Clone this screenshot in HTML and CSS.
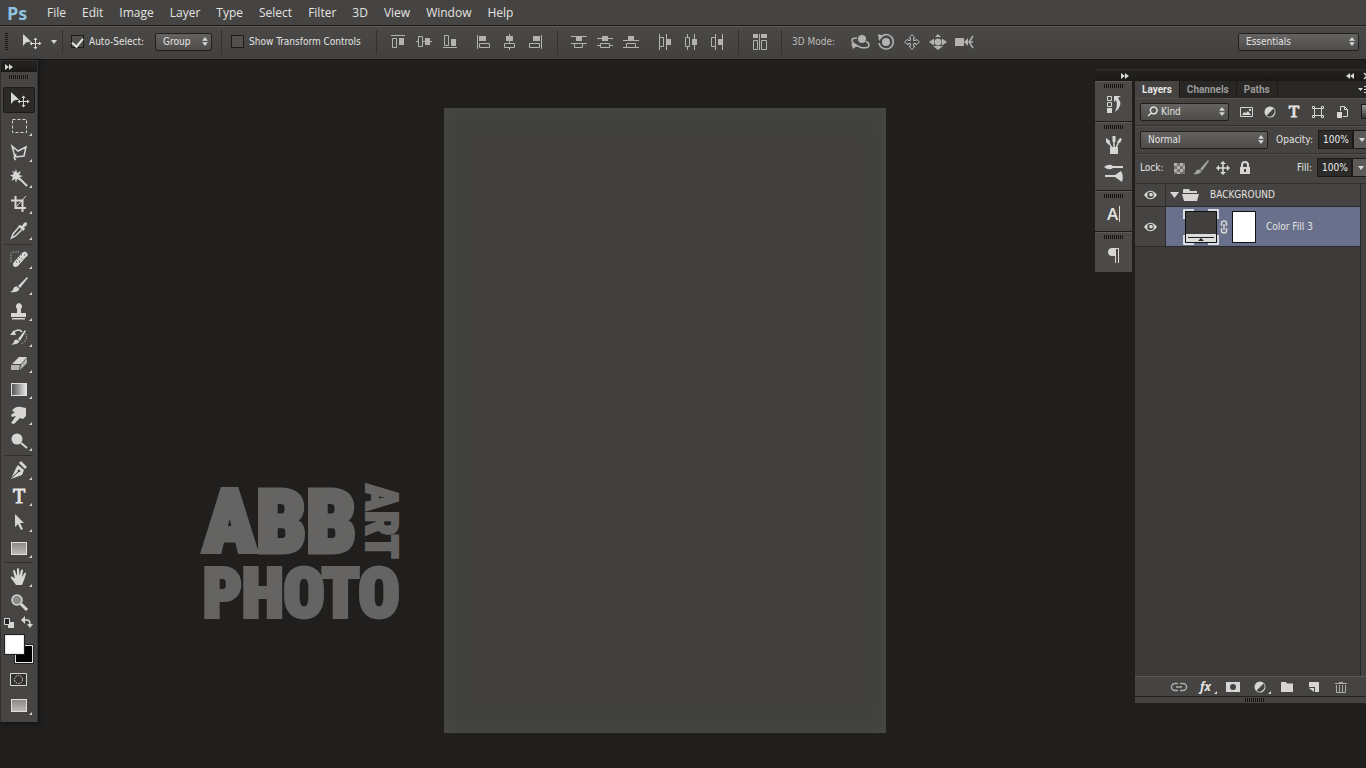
FILE: index.html
```html
<!DOCTYPE html>
<html lang="en">
<head>
<meta charset="utf-8">
<title>Ps</title>
<link rel="stylesheet" href="styles.css">
</head>
<body>
<svg class="defs" aria-hidden="true">
  <symbol id="updown" viewBox="0 0 7 11"><path d="M0 4.500 3.500 0 7 4.500zM0 6.500 3.500 11 7 6.500z"/></symbol>
  <symbol id="corner" viewBox="0 0 4 4"><path d="M4 0v4H0z"/></symbol>
  <symbol id="eye" viewBox="0 0 14 10"><path fill-rule="evenodd" d="M0 5Q7-4 14 5 7 14 0 5zM7 1.500a3.500 3.500 0 1 0 0 7 3.500 3.500 0 0 0 0-7z"/><circle cx="7.500" cy="4.500" r="2"/></symbol>
  <symbol id="move" viewBox="0 0 24 24"><path d="M4 4v12l3-3.500 5-1z"/><path d="M16.500 7.500l2 2.500h-1.500v3h3v-1.500l2.500 2-2.500 2V14h-3v3h1.500l-2 2.500-2-2.500H16v-3h-3v1.500l-2.500-2 2.500-2V13h3v-3h-1.500z"/></symbol>
  <symbol id="cross" viewBox="0 0 16 16"><path d="M8 1l3 3H8.800v3.200H12V5l3 3-3 3V8.800H8.800V12H11l-3 3-3-3h2.200V8.800H4V11L1 8l3-3v2.200h3.200V4H5z"/></symbol>
  <symbol id="halfdisc" viewBox="0 0 12 12"><circle cx="6" cy="6" r="5.500"/><path class="ink" d="M9.500 2.500a5 5 0 0 1-7 7z"/></symbol>
</svg>

<nav class="menubar">
  <span class="logo">Ps</span>
  <a href="#">File</a><a href="#">Edit</a><a href="#">Image</a><a href="#">Layer</a><a href="#">Type</a><a href="#">Select</a><a href="#">Filter</a><a href="#">3D</a><a href="#">View</a><a href="#">Window</a><a href="#">Help</a>
</nav>

<header class="options">
  <i class="vgrip"></i>
  <button class="current" aria-label="Move tool"><svg class="i24"><use href="#move"/></svg><svg class="caret" viewBox="0 0 6 4"><path d="M0 0h6L3 4z"/></svg></button>
  <i class="bar"></i>
  <label class="check auto"><input type="checkbox" checked>Auto-Select:</label>
  <span class="pick group"><select aria-label="Auto-Select"><option>Group</option></select><svg><use href="#updown"/></svg></span>
  <i class="bar"></i>
  <label class="check transform"><input type="checkbox">Show Transform Controls</label>
  <i class="bar"></i>
  <div class="set">
    <button aria-label="Align top edges"><svg viewBox="0 0 16 16"><path class="s" d="M1 1.500h14M2.500 4.500h4v9h-4z"/><path d="M9 4h5v7H9z"/></svg></button>
    <button aria-label="Align vertical centers"><svg viewBox="0 0 16 16"><path class="s" d="M0 7.500h2M7 7.500h2M14 7.500h2M2.500 2.500h4v10h-4z"/><path d="M9 4h5v7H9z"/></svg></button>
    <button aria-label="Align bottom edges"><svg viewBox="0 0 16 16"><path class="s" d="M1 13.500h14M2.500 1.500h4v10h-4z"/><path d="M9 5h5v7H9z"/></svg></button>
  </div>
  <div class="set">
    <button aria-label="Align left edges"><svg viewBox="0 0 16 16"><path class="s" d="M1.500 1v14M3.500 9.500h10v4h-10z"/><path d="M3 2h7v5H3z"/></svg></button>
    <button aria-label="Align horizontal centers"><svg viewBox="0 0 16 16"><path class="s" d="M7.500 0v2M7.500 7v2M7.500 14v2M2.500 9.500h10v4h-10z"/><path d="M4 2h7v5H4z"/></svg></button>
    <button aria-label="Align right edges"><svg viewBox="0 0 16 16"><path class="s" d="M13.500 1v14M1.500 9.500h10v4h-10z"/><path d="M5 2h7v5H5z"/></svg></button>
  </div>
  <i class="bar"></i>
  <div class="set">
    <button aria-label="Distribute top edges"><svg viewBox="0 0 16 16"><path class="s" d="M0 2.500h16M0 9.500h16M3.500 9.500h8v4h-8z"/><path d="M5 3h6v4H5z"/></svg></button>
    <button aria-label="Distribute vertical centers"><svg viewBox="0 0 16 16"><path class="s" d="M0 4.500h16M0 11.500h4M12 11.500h4M3.500 9.500h9v4h-9z"/><path d="M5 2h6v5H5z"/></svg></button>
    <button aria-label="Distribute bottom edges"><svg viewBox="0 0 16 16"><path class="s" d="M0 6.500h16M0 13.500h16M3.500 9.500h9v4h-9z"/><path d="M5 2h6v4H5z"/></svg></button>
  </div>
  <div class="set">
    <button aria-label="Distribute left edges"><svg viewBox="0 0 16 16"><path class="s" d="M2.500 0v16M9.500 0v16M2.500 3.500h4v9h-4z"/><path d="M10 5h4v6h-4z"/></svg></button>
    <button aria-label="Distribute horizontal centers"><svg viewBox="0 0 16 16"><path class="s" d="M4.500 0v3M4.500 13v3M11.500 0v16M2.500 3.500h4v9h-4z"/><path d="M9 5h5v6H9z"/></svg></button>
    <button aria-label="Distribute right edges"><svg viewBox="0 0 16 16"><path class="s" d="M6.500 0v16M13.500 0v16M2.500 3.500h4v9h-4z"/><path d="M9 5h4v6H9z"/></svg></button>
  </div>
  <i class="bar"></i>
  <div class="set"><button aria-label="Auto-align layers"><svg viewBox="0 0 16 16"><path class="s" d="M7.500 0v16M1.500 6.500h4v9h-4zM9.500 6.500h5v9h-5z"/><path d="M1 0h5v4H1zM9 0h6v4H9z"/></svg></button></div>
  <i class="bar"></i>
  <span class="mode">3D Mode:</span>
  <div class="set three">
    <button aria-label="Rotate the 3D object"><svg viewBox="0 0 20 16"><circle cx="12" cy="5" r="4"/><path class="k" d="M7 4Q1 4 2 7t9 6.500q8 1 8-2t-3-4M3 13l4-1"/><path d="M1 9l6 2-4 4z"/></svg></button>
    <button aria-label="Roll the 3D object"><svg viewBox="0 0 20 16"><circle cx="10" cy="8" r="4"/><path class="k" d="M4 4a7.200 7.200 0 1 1-1 5"/><path d="M2 0l5 2-4 5z"/></svg></button>
    <button aria-label="Drag the 3D object"><svg viewBox="0 0 20 16"><path class="s" d="M10 .5l3 3.500h-1.500v2.500H14V5l3.500 3-3.500 3V9.500h-2.500V12H13l-3 3.500L7 12h1.500V9.500H6V11L2.500 8 6 5v1.500h2.500V4H7z"/></svg></button>
    <button aria-label="Slide the 3D object"><svg viewBox="0 0 20 16"><circle cx="10" cy="8" r="3.600"/><path d="M10 0l3 3H7zM10 16l5-4H5zM1 8l5-3.500v7zM19 8l-5-3.500v7z"/></svg></button>
    <button aria-label="Zoom the 3D camera"><svg viewBox="0 0 20 16"><path d="M1 4h9v8H1zM10 8l4-4v8z"/><path class="k" d="M19 2l-4 6 4 6M16 8h3"/></svg></button>
  </div>
  <span class="pick essentials"><select aria-label="Workspace"><option>Essentials</option></select><svg><use href="#updown"/></svg></span>
</header>

<main class="workspace">
  <aside class="tools">
    <div class="cap"><svg viewBox="0 0 8 6"><path d="M0 0l4 3-4 3zM4 0l4 3-4 3z"/></svg></div>
    <i class="grip"></i>
    <button class="on" aria-label="Move"><svg class="i24"><use href="#move"/></svg></button>
    <button aria-label="Marquee"><svg class="i24" viewBox="0 0 24 24"><rect class="s" x="5.500" y="5.500" width="14" height="13" stroke-dasharray="3 2"/></svg><svg class="more"><use href="#corner"/></svg></button>
    <button aria-label="Lasso"><svg class="i24" viewBox="0 0 24 24"><path class="k" d="M5 6l6 5 8-4-2 9-9 1zM8 17l1-3M8 16q-2 2 1 4"/></svg><svg class="more"><use href="#corner"/></svg></button>
    <button aria-label="Magic wand"><svg class="i24" viewBox="0 0 24 24"><path d="M9 3l1 4 4-2-2 4 4 1-4 1.500 2 3.500-4-2-1 4-1-4-3.500 2L6 11 3 9.500 7 8 5 5l3 1z"/><path class="w" d="M12 12l8 8"/></svg><svg class="more"><use href="#corner"/></svg></button>
    <button aria-label="Crop"><svg class="i24" viewBox="0 0 24 24"><path class="w" d="M8.500 4v12H19M4 8.500h11.500V20"/><path class="s" d="M9 15L19 4"/></svg><svg class="more"><use href="#corner"/></svg></button>
    <button aria-label="Eyedropper"><svg class="i24" viewBox="0 0 24 24"><path d="M13 7l2 1 2-3q3-2 3 1 0 2-3 3l1 2-2 2-5-5z"/><path class="k" d="M12 9l-6 7-1.500 4 4-2 6-6"/></svg><svg class="more"><use href="#corner"/></svg></button>
    <hr>
    <button aria-label="Healing brush"><svg class="i24" viewBox="0 0 24 24"><path d="M7 15l8-9q3-3 5 0t-1 4l-8 9q-3 2-4.500 0T7 15z"/><path class="s" stroke-dasharray="1 1.500" d="M12 5H7Q4 5 4 8v8"/><path class="dots" stroke-dasharray="1 2" d="M10 12l5 4M9 15h4M14 8h4M12 10l5 3"/></svg><svg class="more"><use href="#corner"/></svg></button>
    <button aria-label="Brush"><svg class="i24" viewBox="0 0 24 24"><path d="M20 4l1 1-8 10-2-2zM10 13.500l2.500 2.500q-2 4-9.500 3 3-1 3.500-3.500t3.500-2z"/></svg><svg class="more"><use href="#corner"/></svg></button>
    <button aria-label="Clone stamp"><svg class="i24" viewBox="0 0 24 24"><path d="M12 4a3.500 3.500 0 0 1 2 6v4h5v4H4v-4h6v-4a3.500 3.500 0 0 1 2-6zM5 19h13v1.500H5z"/></svg><svg class="more"><use href="#corner"/></svg></button>
    <button aria-label="History brush"><svg class="i24" viewBox="0 0 24 24"><path d="M18 5l1 1-6 10-2-2zM10 14.500l2.500 2q-2 3.500-8.500 3 3-1 3-3t3-2zM3 10l4-5 2 5z"/><path class="k" d="M7 7q5-4 8 0"/><path class="s" stroke-dasharray="1 1" d="M19 9q2 7-5 10"/></svg><svg class="more"><use href="#corner"/></svg></button>
    <button aria-label="Eraser"><svg class="i24" viewBox="0 0 24 24"><path d="M12 6h8l-6 7H5z"/><path fill="#b5b4b2" d="M4 14h9l-1 5H4zM14 14l6-7v5l-7 7z"/></svg><svg class="more"><use href="#corner"/></svg></button>
    <button aria-label="Gradient"><i class="swatch ramp"></i><svg class="more"><use href="#corner"/></svg></button>
    <button aria-label="Smudge"><svg class="i24" viewBox="0 0 24 24"><path d="M5 8q3-5 9-4l5 1v8l-3 3-3-1-6 6-3-1 5-7-4 1-1-2 4-3z"/></svg><svg class="more"><use href="#corner"/></svg></button>
    <button aria-label="Dodge"><svg class="i24" viewBox="0 0 24 24"><circle cx="10" cy="10" r="5.500"/><path class="w" d="M14 14l6 5"/></svg><svg class="more"><use href="#corner"/></svg></button>
    <hr>
    <button aria-label="Pen"><svg class="i24" viewBox="0 0 24 24"><path d="M14 3l6 6-2 2-6-6zM11 7l6 5-2 5-11 4 5-11z"/><path class="dark" d="M4.500 20L11 14"/><circle class="ink" cx="12" cy="13" r="1.300"/></svg><svg class="more"><use href="#corner"/></svg></button>
    <button class="type" aria-label="Type">T<svg class="more"><use href="#corner"/></svg></button>
    <button aria-label="Path selection"><svg class="i24" viewBox="0 0 24 24"><path d="M8 4l9 9h-4l3 6-2 1-3-6-3 3z"/></svg><svg class="more"><use href="#corner"/></svg></button>
    <button aria-label="Rectangle"><i class="swatch"></i><svg class="more"><use href="#corner"/></svg></button>
    <hr>
    <button aria-label="Hand"><svg class="i24" viewBox="0 0 24 24"><path d="M9 20l-5-7q-1-2 1-1.500l3 2L6 6q1-2 2 0l2 5V4q1-2 2 0l.5 7L14 5q1-1 2 0l-1 7 2.500-4q2-1 1.500 1l-2 6-2 5H9z"/></svg><svg class="more"><use href="#corner"/></svg></button>
    <button aria-label="Zoom"><svg class="i24" viewBox="0 0 24 24"><circle cx="10" cy="9" r="5" fill="#8b8a88" stroke="#d7d6d4" stroke-width="1.500"/><path stroke="#d7d6d4" stroke-width="3" d="M14 13l6 6"/></svg></button>
    <div class="colors">
      <svg viewBox="0 0 38 14"><path fill="#d7d6d4" d="M8 6h6v6H8z"/><path fill="#222" stroke="#d7d6d4" d="M4.500 2.500h5v6h-5z"/><path class="k" d="M24 4h3q3 0 3 4"/><path d="M25 0v8l-4-4zM27 8h6l-3 4z"/></svg>
      <button class="back" aria-label="Background color"></button>
      <button class="front" aria-label="Foreground color"></button>
    </div>
    <button aria-label="Quick mask"><svg class="i24" viewBox="0 0 24 24"><path fill="#333231" stroke="#d7d6d4" d="M3.500 6.500h16v12h-16z"/><circle class="s" cx="11.500" cy="12.500" r="4" stroke-dasharray="1.500 1"/></svg></button>
    <button aria-label="Screen mode"><i class="swatch"></i><svg class="more"><use href="#corner"/></svg></button>
  </aside>

  <section class="stage">
    <div class="mark">
      <div class="mark-top"><span class="abb">ABB</span><span class="art">ART</span></div>
      <div class="photo">PHOTO</div>
    </div>
    <div class="artboard"></div>
  </section>

  <aside class="dock">
    <div class="cap"><svg class="right" viewBox="0 0 8 6"><path d="M0 0l4 3-4 3zM4 0l4 3-4 3z"/></svg><svg viewBox="0 0 8 6"><path d="M4 0L0 3l4 3zM8 0L4 3l4 3z"/></svg><svg class="close" viewBox="0 0 8 6"><path class="k" d="M0 0l6 6M6 0L0 6"/></svg></div>
    <div class="dock-body">
      <div class="rail">
        <section><i class="grip"></i><button aria-label="History"><svg class="i24" viewBox="0 0 24 24"><path class="s" d="M5.500 4.500h4v4h-4zM5.500 10.500h4v4h-4z"/><path d="M5 16h5v5H5zM12 4h7l-3 2q6 7-3 14 3-7 1-12l-2 2z"/></svg></button></section>
        <section><i class="grip"></i><button aria-label="Brush presets"><svg class="i24" viewBox="0 0 24 24"><path d="M8 14h8v7H8z"/><path class="k" d="M10 15L6 8M12 15V5M14 15l3-7"/><path d="M4 5l4 3-1 4-3-3zM10.500 3h3v6h-3zM15 9l3-4 2 1-2 4z"/></svg></button><button aria-label="Brush"><svg class="i24" viewBox="0 0 24 24"><path d="M2 6q5-4 9-1h10v2H11q-4 3-9-1zM3 14h10l6-4q3 5 1 11l-7-5H3z"/></svg></button></section>
        <section><i class="grip"></i><button class="char" aria-label="Character">A<i></i></button></section>
        <section><i class="grip"></i><button aria-label="Paragraph"><svg class="i24" viewBox="0 0 24 24"><path d="M17 5v15h-1V6h-2v14h-1v-7H9q-3-1-3-4t3-4z"/></svg></button></section>
      </div>
      <div class="panel">
        <div class="tabs"><button class="on">Layers</button><button>Channels</button><button>Paths</button><svg viewBox="0 0 12 8"><path d="M0 2h5L2.500 5zM6 0h6v1H6zM6 3h6v1H6zM6 6h6v1H6z"/></svg></div>
        <div class="row filters">
          <span class="pick kind"><svg class="lens" viewBox="0 0 11 11"><path d="M6.500 1a3.400 3.400 0 1 1-2 6L1 10M4.500 7a3.400 3.400 0 0 1 2-6"/></svg><select aria-label="Filter"><option>Kind</option></select><svg><use href="#updown"/></svg></span>
          <button aria-label="Pixel layers"><svg class="i16" viewBox="0 0 16 16"><path class="s" d="M2.500 3.500h12v9h-12z"/><path d="M4 11l2-3 2 1 2-2 3 4zM11 5h2v2h-2z"/></svg></button>
          <button aria-label="Adjustment layers"><svg class="i12"><use href="#halfdisc"/></svg></button>
          <button class="type" aria-label="Type layers">T</button>
          <button aria-label="Shape layers"><svg class="i16" viewBox="0 0 16 16"><path class="s" d="M4.500 4.500h7v7h-7zM2.500 2.500h2v2h-2zM11.500 2.500h2v2h-2zM2.500 11.500h2v2h-2zM11.500 11.500h2v2h-2z"/></svg></button>
          <button aria-label="Smart objects"><svg class="i16" viewBox="0 0 16 16"><path class="s" d="M6.500 7V2.500h4l3 3v7H9M10.500 2.500v3h3"/><path d="M3 8h5v6H3z"/></svg></button>
          <button class="toggle" aria-label="Toggle filtering"></button>
        </div>
        <div class="row blend">
          <span class="pick normal"><select aria-label="Blend mode"><option>Normal</option></select><svg><use href="#updown"/></svg></span>
          <label class="num" for="opacity">Opacity:</label><input id="opacity" type="text" value="100%"><button class="drop" aria-label="Opacity slider"><svg class="caret" viewBox="0 0 6 4"><path d="M0 0h6L3 4z"/></svg></button>
        </div>
        <div class="row locks">
          <span class="lock-label">Lock:</span>
          <button aria-label="Lock transparency"><svg class="i16" viewBox="0 0 16 16"><path fill="#777674" d="M3 3h11v11H3z"/><path fill="#b0afad" d="M3 3h3v3H3zM9 3h3v3H9zM6 6h3v3H6zM12 6h2v3h-2zM3 9h3v3H3zM9 9h3v3H9zM6 12h3v2H6z"/></svg></button>
          <button aria-label="Lock pixels"><svg class="i16" viewBox="0 0 16 16"><path fill="#a3a2a0" d="M15 0l1 1-7 10-2-2zM6.500 9.500l2 2Q6 15 0 14q3-1 3-3t3.500-1.500z"/></svg></button>
          <button aria-label="Lock position"><svg class="i16"><use href="#cross"/></svg></button>
          <button aria-label="Lock all"><svg class="i16" viewBox="0 0 16 16"><path class="w" d="M5 8V5q0-3 3-3t3 3v3"/><path fill-rule="evenodd" d="M3 7h10v7H3zM7 9v3h2V9z"/></svg></button>
          <label class="num" for="fill">Fill:</label><input id="fill" type="text" value="100%"><button class="drop" aria-label="Fill slider"><svg class="caret" viewBox="0 0 6 4"><path d="M0 0h6L3 4z"/></svg></button>
        </div>
        <div class="list">
          <div class="layer folder"><button class="eye" aria-label="Visibility"><svg><use href="#eye"/></svg></button>
            <svg class="dir" viewBox="0 0 28 12"><path d="M0 3h9l-4.500 6z"/><path d="M13 5V1q0-1 1-1h5l1 2h7v2H13zM12 5h17l-2 7H14z"/></svg><span>BACKGROUND</span></div>
          <div class="layer selected"><button class="eye" aria-label="Visibility"><svg><use href="#eye"/></svg></button>
            <svg class="thumb" viewBox="0 0 36 36"><path fill="none" stroke="#fff" stroke-width="1.500" d="M1 10V1h10M25 1h10v9M35 26v9H25M11 35H1v-9"/><path fill="#41403e" stroke="#111" d="M2.500 2.500h31v31h-31z"/><path fill="#ddd" d="M3 25h30v8H3z"/><path fill="#222" d="M5 28h26v1H5zM18 29l3 3h-6z"/></svg>
            <svg class="chain" viewBox="0 0 8 14"><path class="k" d="M1.500 6V3Q1.500 1 4 1t2.500 2v3M1.500 8v3q0 2 2.500 2t2.500-2V8M4 4v6"/></svg>
            <i class="mask"></i><span>Color Fill 3</span></div>
        </div>
        <div class="actions">
          <button class="dim" aria-label="Link layers"><svg class="i16" viewBox="0 0 16 16"><path class="k" d="M7 4.500H4a3.500 3.500 0 0 0 0 7h3M9 4.500h3a3.500 3.500 0 0 1 0 7H9M5 8h6"/></svg></button>
          <button class="fx" aria-label="Layer style">fx<svg class="more"><use href="#corner"/></svg></button>
          <button aria-label="Add mask"><svg class="i16" viewBox="0 0 16 16"><path fill-rule="evenodd" d="M1 3h14v10H1zM8 5a3 3 0 1 0 0 6 3 3 0 0 0 0-6z"/></svg></button>
          <button aria-label="New adjustment"><svg class="i12"><use href="#halfdisc"/></svg><svg class="more"><use href="#corner"/></svg></button>
          <button aria-label="New group"><svg class="i16" viewBox="0 0 16 16"><path d="M2 3h5l1 1.500h6V13H2z"/></svg></button>
          <button aria-label="New layer"><svg class="i16" viewBox="0 0 16 16"><path d="M3 3h10v10H9V8H3z"/><path d="M3 9h5v4z"/></svg></button>
          <button class="dim" aria-label="Delete layer"><svg class="i16" viewBox="0 0 16 16"><path class="s" d="M2 4.500h12M6 3.500h4M3.500 6v7.500h9V6M6.500 6v7M9.500 6v7"/></svg></button>
        </div>
        <div class="foot"><i class="grip"></i></div>
      </div>
    </div>
  </aside>
</main>
</body>
</html>
```

FILE: styles.css
```css
* { box-sizing: border-box; }

body {
  margin: 0;
  min-height: 100vh;
  display: flex;
  flex-direction: column;
  overflow: hidden;
  background: #201f1e;
  color: #e4e3e1;
  font: 10px/14px "DejaVu Sans Condensed", "Noto Sans", sans-serif;
}

button, select, input { font: inherit; color: inherit; }
button { padding: 0; border: 0; background: none; display: flex; align-items: center; justify-content: center; position: relative; flex: none; }
svg { fill: #d7d6d4; flex: none; overflow: visible; }
i { display: block; flex: none; }
.defs { display: none; }
.s { fill: none; stroke: #d7d6d4; stroke-width: 1; }
.k { fill: none; stroke: #d7d6d4; stroke-width: 1.500; }
.w { fill: none; stroke: #d7d6d4; stroke-width: 2; }
.ink { fill: #454443; }
.dark, .dots { fill: none; stroke: #454443; }
.i24 { width: 24px; height: 24px; }
.i16 { width: 16px; height: 16px; }
.i12 { width: 12px; height: 12px; }
.caret { width: 6px; height: 4px; }

/* Menu bar */
.menubar {
  height: 25px;
  flex: none;
  display: flex;
  align-items: center;
  gap: 16px;
  padding-left: 7px;
  background: #454443;
  font: 12px/16px "Open Sans", "Noto Sans", sans-serif;
}
.menubar a { color: #e4e3e1; text-decoration: none; }
.logo { width: 24px; color: #8fc1e0; font: bold 18px/24px "Open Sans", sans-serif; }

/* Options bar */
.options {
  height: 35px;
  flex: none;
  display: flex;
  align-items: center;
  padding: 0 7px 2px 5px;
  background: linear-gradient(#4a4948, #424140);
  border-top: 1px solid #1b1a19;
  border-bottom: 1px solid #171615;
  box-shadow: inset 0 1px #5c5b59;
}
.vgrip { width: 3px; height: 18px; background: repeating-linear-gradient(#1c1b1a 0 1px, #454443 1px 2px); }
.current { width: 48px; gap: 8px; margin-left: 6px; }
.bar { width: 1px; height: 24px; background: #333231; }
.check { display: flex; align-items: center; gap: 5px; margin-left: 8px; white-space: nowrap; }
.check.auto { width: 84px; }
.check.transform { width: 145px; margin-left: 9px; }
.check input {
  appearance: none;
  width: 13px;
  height: 13px;
  margin: 0;
  background: #51504f;
  border: 1px solid #1d1c1b;
  display: grid;
  place-items: center;
}
.check input:checked::after {
  content: "";
  width: 9px;
  height: 5px;
  border: solid #e8e7e5;
  border-width: 0 0 2px 2px;
  rotate: -50deg;
}
.set { display: flex; margin-left: 8px; }
.set + .bar { margin-left: 8px; }
.set button { width: 26px; height: 24px; }
.set svg { width: 16px; height: 16px; fill: #b3b2b0; }
.set .s, .set .k { stroke: #b3b2b0; }
.mode { width: 55px; margin-left: 10px; color: #bbbab8; }
.set.three { margin-left: 0; }
.three svg { width: 20px; }

.pick { position: relative; display: flex; align-items: center; height: 18px; }
.pick select {
  appearance: none;
  width: 100%;
  height: 18px;
  padding: 0 16px 0 7px;
  border: 1px solid #1f1e1d;
  border-radius: 2px;
  background: linear-gradient(#646362, #4d4c4b);
  line-height: 16px;
}
.pick > svg:last-child { position: absolute; right: 4px; width: 6px; height: 9px; pointer-events: none; }
.group { width: 57px; margin-right: 9px; }
.essentials { width: 121px; margin-left: auto; }

/* Workspace */
.workspace { flex: 1; display: flex; align-items: flex-start; min-width: 0; }
.cap { height: 12px; display: flex; align-items: center; background: linear-gradient(#242322, #1a1918); border-top: 1px solid #302f2e; }
.cap svg { width: 8px; height: 6px; }
.grip { width: 20px; height: 4px; background: repeating-linear-gradient(90deg, #161514 0 1px, #4a4948 1px 2px); }

.tools {
  width: 38px;
  flex: none;
  display: flex;
  flex-direction: column;
  align-items: center;
  padding-bottom: 4px;
  background: #464544;
  border: solid #323130;
  border-width: 0 1px;
  box-shadow: 1px 1px 4px #111;
}
.tools .cap { width: 100%; padding-left: 4px; }
.tools > .grip { margin: 3px 0 8px; }
.tools > button { width: 32px; height: 26px; }
.tools > button.on { background: #2b2a29; border: 1px solid #1b1a19; border-radius: 2px; }
.tools hr { width: 28px; height: 1px; margin: 1px 0; border: 0; background: #2e2d2c; }
.more { position: absolute; right: 3px; bottom: 3px; width: 3px; height: 3px; }
.type { font: 20px/20px "Liberation Serif", serif; -webkit-text-stroke: 1px; }
.swatch { width: 16px; height: 13px; border: 1px solid #e0dfdd; background: linear-gradient(#8b8a88, #bbbab8); }
.swatch.ramp { background: linear-gradient(90deg, #555, #e4e4e4); }
.colors { position: relative; width: 36px; height: 50px; }
.colors svg { width: 38px; height: 14px; display: block; margin-left: -1px; }
.colors button { position: absolute; width: 19px; height: 19px; border: 1px solid #e6e6e6; outline: 1px solid #222; }
.colors .back { left: 14px; top: 29px; width: 18px; height: 18px; background: #000; }
.colors .front { left: 4px; top: 19px; background: #fff; }

.stage { flex: 1; min-width: 0; align-self: stretch; display: flex; padding: 48px 209px 35px 165px; }
.mark { width: 200px; margin: 376px 41px 0 0; flex: none; color: #656463; font-family: "Roboto Condensed", "Open Sans Condensed", sans-serif; font-weight: 900; }
.mark-top { display: flex; justify-content: space-between; height: 76px; }
.abb { font-size: 88px; line-height: 76px; -webkit-text-stroke: 5px; }
.art { writing-mode: vertical-rl; font-size: 44px; line-height: 44px; -webkit-text-stroke: 2px; }
.photo { font-size: 68px; line-height: 68px; -webkit-text-stroke: 4px; }
.artboard { flex: 1; background: #41403e; box-shadow: inset 0 0 24px #4a4947; }

/* Dock */
.dock { width: 271px; flex: none; margin-top: 9px; overflow: hidden; }
.dock .cap { padding: 0 0 0 26px; }
.dock .cap .right { margin-right: 217px; }
.dock .cap .close { margin-left: 10px; }
.dock-body { display: flex; align-items: flex-start; gap: 3px; background: #201f1e; }
.rail { width: 37px; flex: none; background: #1f1e1d; }
.rail section { display: flex; flex-direction: column; align-items: center; padding: 2px 0 3px; margin-bottom: 1px; background: #4b4a49; border-top: 1px solid #5b5a58; }
.rail section:last-child { margin-bottom: 0; }
.rail .grip { margin-bottom: 2px; }
.rail button { width: 32px; height: 28px; }
.char { font: 600 17px/20px "Open Sans", sans-serif; gap: 1px; }
.char i { width: 1px; height: 16px; background: #d7d6d4; }

.panel { flex: 1; min-width: 0; background: #454443; }
.tabs { height: 17px; display: flex; background: #282726; font: 700 10px/14px Roboto, sans-serif; }
.tabs button { padding: 0 7px; color: #9b9a98; border-right: 1px solid #1b1a19; }
.tabs button.on { background: #454443; color: #e6e5e3; }
.tabs svg { width: 12px; height: 8px; margin: 5px -4px 0 auto; }
.row { height: 28px; display: flex; align-items: center; padding-left: 5px; border-bottom: 1px solid #302f2e; box-shadow: inset 0 1px #525150; }
.row > * { flex: none; }
.filters button { width: 24px; height: 20px; }
.filters .type { font-size: 17px; }
.kind { width: 89px; margin-right: 5px; }
.kind select { padding-left: 20px; }
.lens { position: absolute; left: 7px; width: 11px; height: 11px; fill: none; stroke: #e2e1df; stroke-width: 1.500; pointer-events: none; }
.filters .toggle { width: 8px; height: 15px; margin-left: 7px; border: 1px solid #1b1a19; background: linear-gradient(#999, #333); }
.normal { width: 128px; }
.num { width: 50px; text-align: right; padding-right: 5px; }
.row input { width: 35px; height: 19px; padding: 0 0 0 4px; border: 1px solid #1b1a19; background: #2c2b2a; color: #eeedeb; }
.drop { width: 18px; height: 19px; border: 1px solid #1b1a19; background: #5b5a58; }
.locks { height: 30px; padding-bottom: 2px; }
.lock-label { width: 28px; }
.locks button:not(.drop) { width: 22px; }
.blend .num, .locks .num { margin-left: auto; }
.row .drop { margin-right: -4px; }

.list { height: 492px; margin-right: 6px; background: #3b3a38; box-shadow: 1px 0 #2a2928; }
.layer { display: flex; align-items: center; background: #454443; border-bottom: 1px solid #2b2a29; }
.eye { width: 31px; align-self: stretch; border-right: 1px solid #2f2e2d; background: #454443; }
.eye svg { width: 13px; height: 10px; }
.folder { height: 23px; }
.dir { width: 28px; height: 12px; margin: 0 12px 0 4px; }
.selected { height: 40px; background: #68708c; }
.thumb { width: 36px; height: 36px; margin-left: 17px; }
.chain { width: 8px; height: 14px; margin: 0 4px 0 1px; }
.mask { width: 24px; height: 32px; margin-right: 10px; background: #fff; border: 1px solid #111; }

.actions { height: 20px; display: flex; align-items: center; padding-left: 30px; border-top: 1px solid #5b5a58; }
.actions button { width: 27px; height: 18px; }
.actions .more { right: 2px; bottom: 2px; }
.dim { opacity: .7; }
.fx { font: italic bold 12px/14px "Open Sans", sans-serif; }
.foot { height: 7px; display: flex; justify-content: center; align-items: center; padding-left: 8px; border-top: 1px solid #222120; }
```
